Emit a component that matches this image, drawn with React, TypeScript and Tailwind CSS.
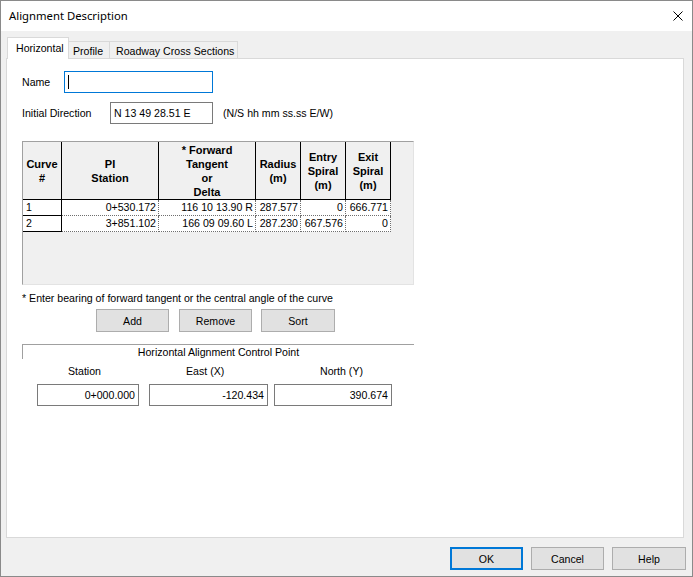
import React from "react";

const cols = [
  { w: "w-[39px]", head: ["Curve", "#"] },
  { w: "w-[97px]", head: ["PI", "Station"] },
  { w: "w-[97px]", head: ["* Forward", "Tangent", "or", "Delta"] },
  { w: "w-[45px]", head: ["Radius", "(m)"] },
  { w: "w-[45px]", head: ["Entry", "Spiral", "(m)"] },
  { w: "w-[45px]", head: ["Exit", "Spiral", "(m)"] },
];

const rows = [
  ["1", "0+530.172", "116 10 13.90 R", "287.577", "0", "666.771"],
  ["2", "3+851.102", "166 09 09.60 L", "287.230", "667.576", "0"],
];

function Btn({ label, w, def }: { label: string; w: string; def?: boolean }) {
  return (
    <div
      className={
        "h-[23px] flex items-center justify-center bg-[#e1e1e1] " +
        w +
        (def ? " border-2 border-[#0078d7]" : " border border-[#adadad]")
      }
    >
      {label}
    </div>
  );
}

export default function App() {
  return (
    <div className="w-[693px] h-[577px] bg-[#f0f0f0] border border-[#8a8a8a] flex flex-col font-['Liberation_Sans',Arial,sans-serif] text-[10.6px] text-black leading-[14px] overflow-hidden">
      {/* Title bar */}
      <div className="h-[30px] bg-white flex items-center justify-between pl-[8px] pr-[9px]">
        <span className="font-['Noto_Sans',sans-serif] text-[11.3px] leading-[16px]">Alignment Description</span>
        <svg width="10" height="10" viewBox="0 0 10 10">
          <path d="M0.5 0.5 L9.5 9.5 M9.5 0.5 L0.5 9.5" stroke="#000" strokeWidth="1" fill="none" />
        </svg>
      </div>

      {/* Body */}
      <div className="pt-[6px] pl-[5px] pr-[8px] flex flex-col">
        {/* Tabs */}
        <div className="h-[21px] flex items-end">
          <div className="relative z-10 -mb-px h-[22px] w-[62px] bg-white border border-b-0 border-[#d9d9d9] pl-[8px] pt-[3px] ml-[1px]">
            Horizontal
          </div>
          <div className="h-[17px] w-[41px] bg-[#f0f0f0] border border-b-0 border-l-0 border-[#d9d9d9] pl-[4px] pt-[2px]">
            Profile
          </div>
          <div className="h-[17px] w-[128px] bg-[#f0f0f0] border border-b-0 border-l-0 border-[#d9d9d9] pl-[6px] pt-[2px]">
            Roadway Cross Sections
          </div>
        </div>

        {/* Panel */}
        <div className="h-[480px] w-[678px] bg-white border border-[#d9d9d9] pl-[15px] pt-[12px] flex flex-col">
          {/* Name */}
          <div className="h-[22px] flex items-center">
            <span className="w-[42px]">Name</span>
            <div className="w-[149px] h-[22px] border border-[#0078d7] flex items-center pl-[3px]">
              <div className="w-px h-[14px] bg-black" />
            </div>
          </div>
          {/* Initial direction */}
          <div className="mt-[9px] h-[22px] flex items-center">
            <span className="w-[88px]">Initial Direction</span>
            <div className="w-[103px] h-[22px] border border-[#7a7a7a] flex items-center pl-[3px]">
              N 13 49 28.51 E
            </div>
            <span className="ml-[10px]">(N/S hh mm ss.ss E/W)</span>
          </div>

          {/* Grid */}
          <div className="mt-[17px] w-[392px] h-[144px] bg-[#f0f0f0] border border-t-[#a0a0a0] border-l-[#a0a0a0] border-r-[#e3e3e3] border-b-[#e3e3e3] flex flex-col">
            <div className="flex">
              {cols.map((c, i) => (
                <div
                  key={i}
                  className={
                    "h-[58px] flex flex-col items-center justify-center text-center border-r border-b border-black font-bold text-[11px] leading-[14px] " +
                    c.w
                  }
                >
                  {c.head.map((h, j) => (
                    <span key={j} className="whitespace-nowrap">{h}</span>
                  ))}
                </div>
              ))}
            </div>
            {rows.map((r, ri) => (
              <div key={ri} className="flex">
                {r.map((v, ci) =>
                  ci === 0 ? (
                    <div
                      key={ci}
                      className={"h-[16px] bg-white border-r border-b border-black pl-[3px] leading-[15px] " + cols[ci].w}
                    >
                      {v}
                    </div>
                  ) : (
                    <div
                      key={ci}
                      className={
                        "h-[16px] bg-white border-r border-b border-dotted border-[#6e6e6e] text-right pr-[2px] leading-[15px] whitespace-nowrap " +
                        cols[ci].w
                      }
                    >
                      {v}
                    </div>
                  )
                )}
              </div>
            ))}
          </div>

          <div className="mt-[6px] h-[14px]">* Enter bearing of forward tangent or the central angle of the curve</div>

          <div className="mt-[4px] flex">
            <div className="ml-[74px]"><Btn label="Add" w="w-[73px]" /></div>
            <div className="ml-[10px]"><Btn label="Remove" w="w-[73px]" /></div>
            <div className="ml-[9px]"><Btn label="Sort" w="w-[74px]" /></div>
          </div>

          {/* Group */}
          <div className="mt-[12px] w-[392px] h-[15px] border-t border-l border-[#a0a0a0] text-center leading-[14px]">
            Horizontal Alignment Control Point
          </div>
          <div className="mt-[5px] h-[14px] flex">
            <span className="ml-[46px] w-[118px]">Station</span>
            <span className="w-[134px]">East (X)</span>
            <span>North (Y)</span>
          </div>
          <div className="mt-[6px] flex">
            <div className="ml-[15px] w-[102px] h-[22px] border border-[#7a7a7a] flex items-center justify-end pr-[3px]">0+000.000</div>
            <div className="ml-[10px] w-[119px] h-[22px] border border-[#7a7a7a] flex items-center justify-end pr-[3px]">-120.434</div>
            <div className="ml-[6px] w-[118px] h-[22px] border border-[#7a7a7a] flex items-center justify-end pr-[3px]">390.674</div>
          </div>
        </div>

        {/* Footer */}
        <div className="h-[38px] pt-[9px] flex justify-end gap-[8px] -mr-[2px]">
          <Btn label="OK" w="w-[73px]" def />
          <Btn label="Cancel" w="w-[73px]" />
          <Btn label="Help" w="w-[74px]" />
        </div>
      </div>
    </div>
  );
}
